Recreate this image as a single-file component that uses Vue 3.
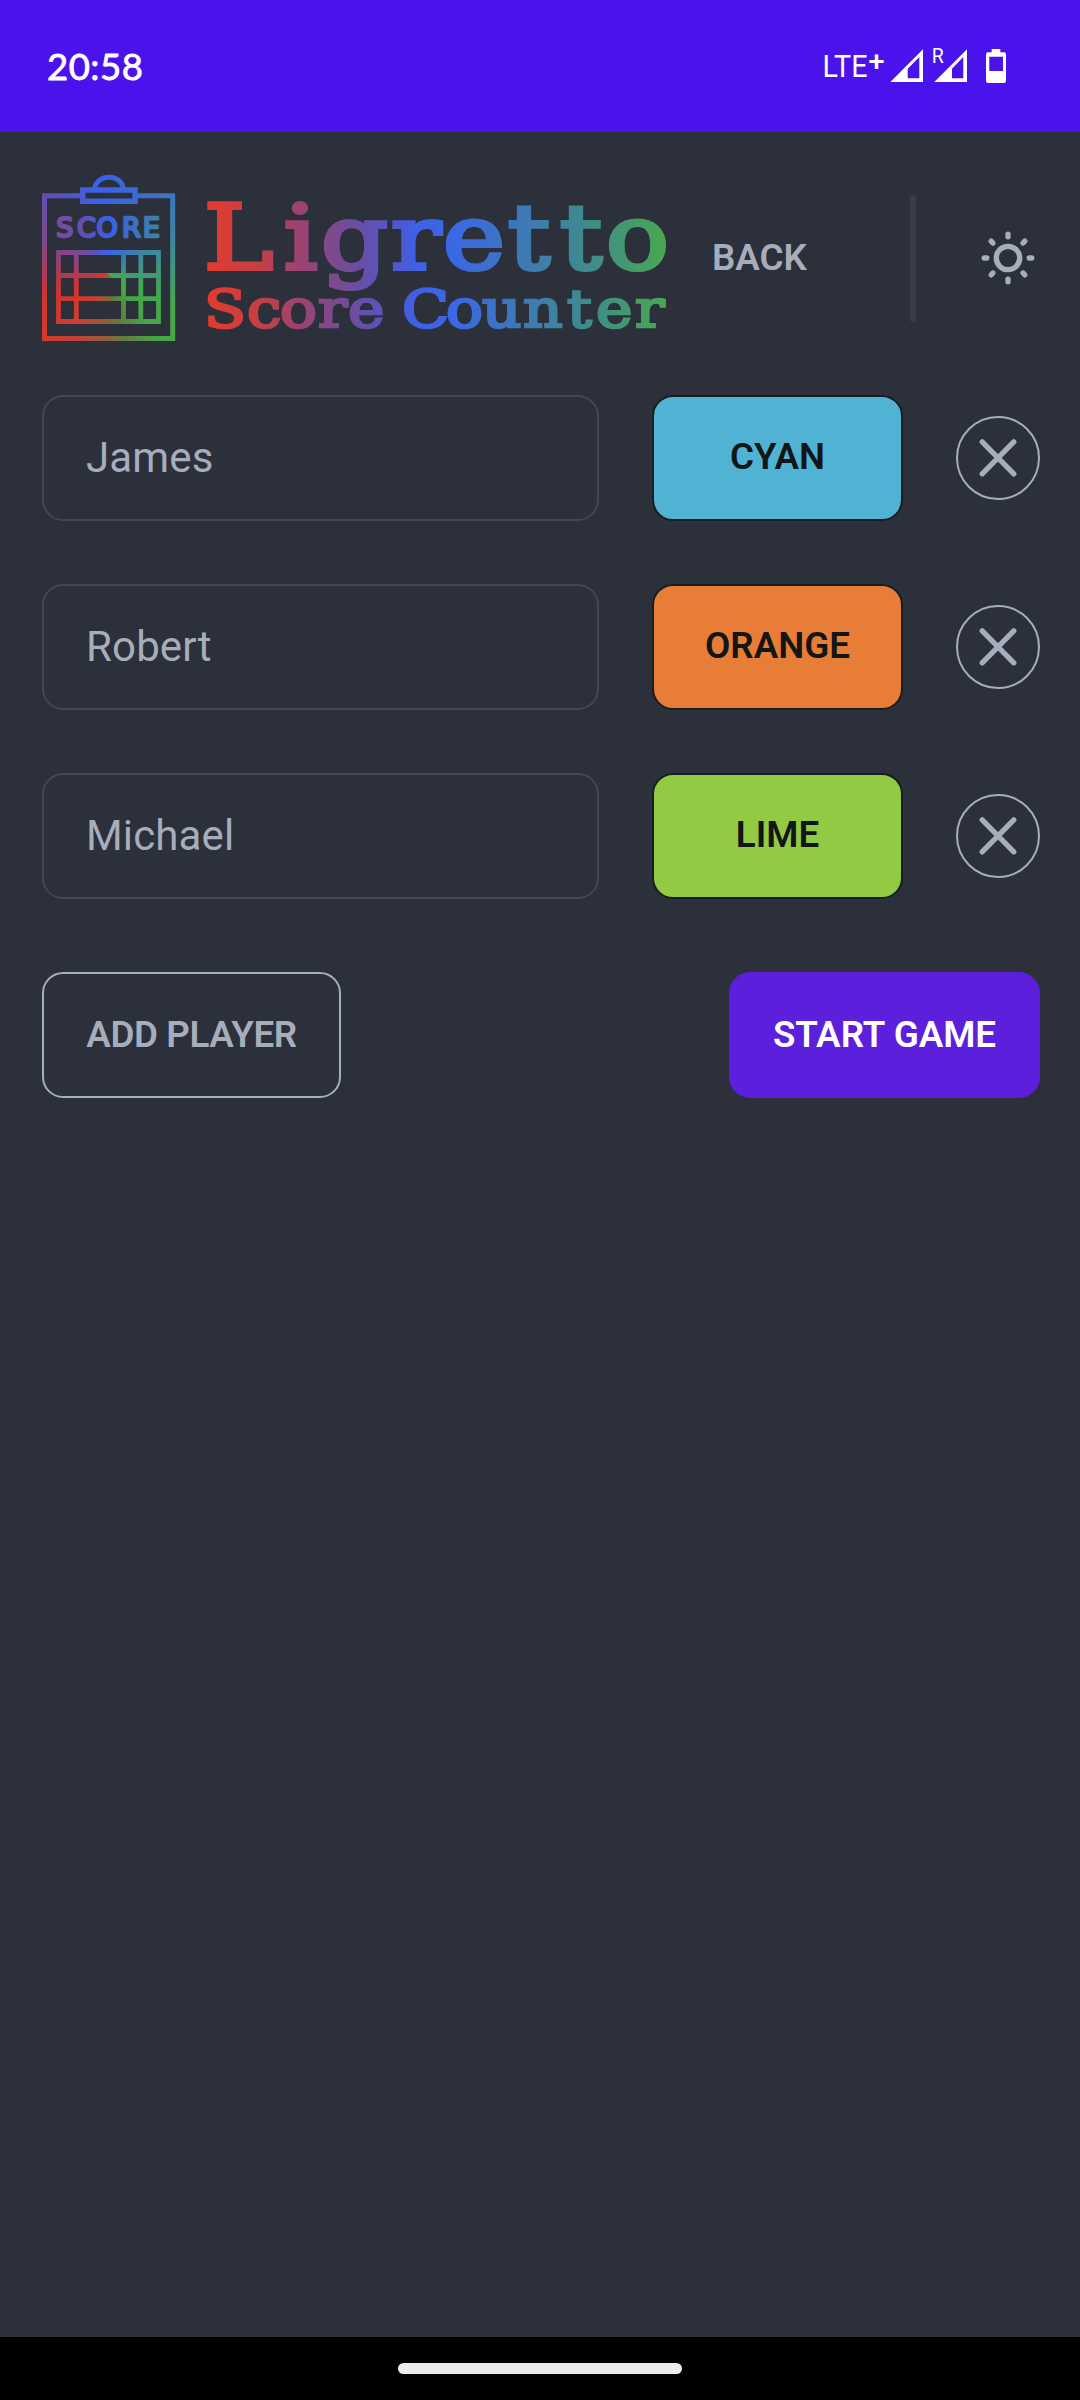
<script setup>
const players = [
  { name: 'James', color: 'CYAN', fill: '#51b3d3' },
  { name: 'Robert', color: 'ORANGE', fill: '#e77d36' },
  { name: 'Michael', color: 'LIME', fill: '#93ca43' },
]

// The wordmark is set wide: letter positions are divided by the stretch factor
const STRETCH = 1.16
const spread = (xs) => xs.map((x) => (x / STRETCH).toFixed(2)).join(' ')
const titleX = spread([204, 284, 321, 391, 443, 508, 560, 606])
const subtitleX = spread([204, 247, 280, 318, 348, 385, 402, 446, 482, 523, 567, 596, 635])
const rays = [0, 45, 90, 135, 180, 225, 270, 315]
</script>

<template>
  <div class="screen">
    <header class="status">
      <span class="clock">20:58</span>
      <svg class="indicators" width="184" height="40" viewBox="824 46 184 40" fill="#fff">
        <text class="net" x="822.5" y="77" font-size="32" textLength="45" lengthAdjust="spacingAndGlyphs">LTE</text>
        <text class="plus" x="868.5" y="70.5" font-size="27" textLength="16" lengthAdjust="spacingAndGlyphs">+</text>
        <path fill-rule="evenodd" d="M890.3 82H923V49.3ZM907.7 68.7 919.3 57V78.3H907.7Z" />
        <text class="net" x="931.8" y="63" font-size="21" textLength="12" lengthAdjust="spacingAndGlyphs">R</text>
        <path fill-rule="evenodd" d="M934.3 82H967V49.3ZM952 68.7 963.3 57V78.3H952Z" />
        <path fill-rule="evenodd" d="M991.7 49H1000.3V52.3H1004Q1006 52.3 1006 54.3V81Q1006 83 1004 83H988Q986 83 986 81V54.3Q986 52.3 988 52.3H991.7ZM989.3 56.7V71H1003V56.7Z" />
      </svg>
    </header>

    <main class="app">
      <nav class="navbar">
        <svg class="logo" width="628" height="172" viewBox="42 172 628 172">
          <defs>
            <linearGradient id="word" gradientUnits="userSpaceOnUse" x1="208" y1="0" x2="666" y2="0" gradientTransform="scale(.86207 1)">
              <stop offset="0" stop-color="#e23b2f" />
              <stop offset=".1" stop-color="#c83f42" />
              <stop offset=".2" stop-color="#9a4470" />
              <stop offset=".31" stop-color="#704c9c" />
              <stop offset=".4" stop-color="#5555c6" />
              <stop offset=".45" stop-color="#4060e4" />
              <stop offset=".54" stop-color="#3b68e4" />
              <stop offset=".68" stop-color="#3d78b8" />
              <stop offset=".86" stop-color="#408f82" />
              <stop offset="1" stop-color="#48a850" />
            </linearGradient>
            <linearGradient id="score" gradientUnits="userSpaceOnUse" x1="57" y1="0" x2="161" y2="0">
              <stop offset="0" stop-color="#7a4b9c" />
              <stop offset=".25" stop-color="#5f50b4" />
              <stop offset=".5" stop-color="#3c60e2" />
              <stop offset=".75" stop-color="#3b70c8" />
              <stop offset="1" stop-color="#3d869c" />
            </linearGradient>
            <mask id="board" maskUnits="userSpaceOnUse" x="42" y="172" width="134" height="171">
              <g fill="none" stroke="#fff" stroke-width="5">
                <path d="M82 195.7H44.5V338.5H172.7V195.7H136" />
                <path d="M82.7 190H135V201.3H82.7Z" stroke-width="5.4" />
                <path d="M94.5 189C97 173.2 121 173.2 123.5 189" />
                <path d="M58.5 252.5H158.5V321.5H58.5ZM58.5 275.5H158.5M58.5 298.7H158.5M76.3 252.5V321.5M123.5 252.5V321.5M140.8 252.5V321.5" stroke-width="4.8" />
              </g>
            </mask>
          </defs>
          <foreignObject x="42" y="172" width="134" height="171" mask="url(#board)">
            <div class="wheel"></div>
          </foreignObject>
          <text class="badge" fill="url(#score)" stroke="url(#score)" x="56.2 77 96.5 122 142.7" y="236.6">SCORE</text>
          <g fill="url(#word)" stroke="url(#word)" transform="scale(1.16 1)">
            <text class="title" :x="titleX" y="269.5">Ligretto</text>
            <text class="subtitle" :x="subtitleX" y="326.6">Score Counter</text>
          </g>
        </svg>
        <a class="back">BACK</a>
        <i class="divider"></i>
        <svg class="sun" width="64" height="64" viewBox="-32 -32 64 64" fill="none" stroke="#a6adbb" stroke-width="5.3" stroke-linecap="round">
          <circle r="11.7" />
          <path v-for="r in rays" :key="r" d="M0-23.8V-21.2" :transform="`rotate(${r})`" />
        </svg>
      </nav>

      <section class="players">
        <div v-for="p in players" :key="p.name" class="player">
          <div class="field">{{ p.name }}</div>
          <button class="color" :style="{ backgroundColor: p.fill }">{{ p.color }}</button>
          <button class="remove">
            <svg width="44" height="44" viewBox="-22 -22 44 44" stroke="#a6adbb" stroke-width="5.3" stroke-linecap="round">
              <path d="M-15.8-16.2 15.8 15.8M15.8-16.2-15.8 15.8" />
            </svg>
          </button>
        </div>
      </section>

      <footer class="actions">
        <button class="add">ADD PLAYER</button>
        <button class="start">START GAME</button>
      </footer>
    </main>

    <div class="gesture"><i></i></div>
  </div>
</template>

<style>
body { background: #000; }
</style>

<style scoped>
* { box-sizing: border-box; }
.screen {
  display: flex;
  flex-direction: column;
  width: 1080px;
  height: 2400px;
  overflow: hidden;
  background: #2b303b;
  color: #a6adbb;
  font-family: Roboto, "Liberation Sans", sans-serif;
}
.status {
  display: flex;
  align-items: center;
  justify-content: space-between;
  height: 132px;
  padding: 0 72px 0 47px;
  background: #4b13ec;
  color: #fff;
}
.clock {
  font: 400 36.5px/40px Lato, sans-serif;
  letter-spacing: .5px;
  -webkit-text-stroke: .8px #fff;
}
.indicators { overflow: visible; }
.net { font-family: Roboto, sans-serif; }
.plus { font-family: Roboto, sans-serif; font-weight: 500; }
.app { flex: 1; padding: 0 40px 0 42px; }
.navbar {
  display: flex;
  align-items: center;
  height: 252px;
}
.logo { display: block; flex: none; }
.wheel {
  width: 134px;
  height: 171px;
  background: conic-gradient(from 0deg at 66px 100px, #3b62e6 0deg, #3b70c8 30deg, #3d84a4 60deg, #3f987c 88deg, #43a850 115deg, #45a846 140deg, #5f8040 165deg, #8c6036 180deg, #b8483a 200deg, #d23a30 220deg, #d0342f 248deg, #a63c5c 272deg, #7b4890 300deg, #5d50b8 325deg, #3b62e6 352deg);
}
.badge { font: 400 27px "DejaVu Sans", sans-serif; stroke-width: 2.5px; stroke-linejoin: round; }
.title { font: 400 90px "DejaVu Serif", serif; stroke-width: 4.2px; }
.subtitle { font: 400 53px "DejaVu Serif", serif; stroke-width: 2.6px; }
.back {
  width: 98px;
  margin-left: 42px;
  font-size: 36.75px;
  font-weight: 600;
  line-height: 42px;
}
.divider {
  width: 6px;
  height: 127px;
  margin-left: 101px;
  border-radius: 3px;
  background: #383d49;
}
.sun { margin-left: 60px; flex: none; }
.players {
  display: flex;
  flex-direction: column;
  gap: 63px;
  padding-top: 11px;
}
.player { display: flex; align-items: center; height: 126px; }
.field {
  width: 557px;
  height: 126px;
  padding-left: 42px;
  border: 2px solid #424752;
  border-radius: 21px;
  font-size: 42px;
  line-height: 122px;
  letter-spacing: .15px;
}
button {
  display: flex;
  align-items: center;
  justify-content: center;
  padding: 0 0 2px;
  margin: 0;
  border: 2px solid #a6adbb;
  border-radius: 21px;
  background: transparent;
  color: #a6adbb;
  font: 600 36.75px/42px Roboto, "Liberation Sans", sans-serif;
}
.color {
  width: 251px;
  height: 126px;
  margin-left: 53px;
  border-color: #171e22;
  color: #131616;
}
.remove {
  width: 84px;
  height: 84px;
  margin-left: 53px;
  padding: 0;
  border-radius: 50%;
}
.actions {
  display: flex;
  justify-content: space-between;
  margin-top: 73px;
}
.actions button { padding: 0; }
.actions .add { width: 299px; height: 126px; letter-spacing: -.4px; }
.actions .start {
  width: 311px;
  height: 126px;
  border-color: #5c1fdb;
  background: #5c1fdb;
  color: #fff;
}
.gesture {
  display: flex;
  justify-content: center;
  height: 63px;
  padding-top: 26px;
  background: #000;
}
.gesture i { width: 284px; height: 11px; border-radius: 6px; background: #ebebeb; }
</style>
